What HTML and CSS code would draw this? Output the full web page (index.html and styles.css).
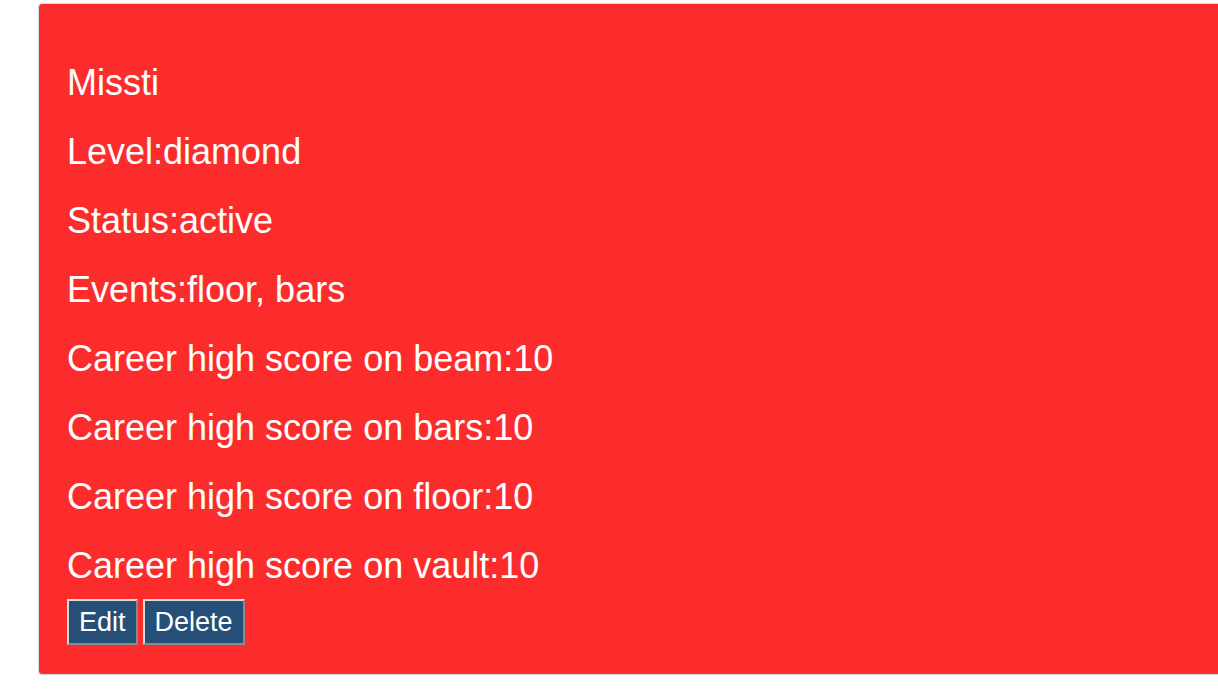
FILE: index.html
```html
<!DOCTYPE html>
<html lang="en">
<head>
<meta charset="utf-8">
<title>Gymnast</title>
<link rel="stylesheet" href="styles.css">
</head>
<body>
  <div class="page">
    <div class="card">
      <p class="line">Missti</p>
      <p class="line">Level:diamond</p>
      <p class="line">Status:active</p>
      <p class="line">Events:floor, bars</p>
      <p class="line">Career high score on beam:10</p>
      <p class="line">Career high score on bars:10</p>
      <p class="line">Career high score on floor:10</p>
      <p class="line">Career high score on vault:10</p>
      <div class="actions">
        <button class="btn">Edit</button>
        <button class="btn">Delete</button>
      </div>
    </div>
  </div>
</body>
</html>
```

FILE: styles.css
```css
html, body {
  margin: 0;
  padding: 0;
  background: #ffffff;
  overflow: hidden;
}

.page {
  padding: 3px 0 0 38px;
  width: 1300px;
}

.card {
  background: #fd2c2c;
  border: 1px solid #dcdcdc;
  border-radius: 4px;
  padding: 44px 28px 29px 28px;
  font-family: "Liberation Sans", Arial, sans-serif;
  color: #ffffff;
}

.line {
  margin: 0;
  font-size: 36px;
  line-height: 69px;
}

.actions {
  display: flex;
  gap: 5px;
  margin-top: -1px;
}

.btn {
  font-family: "Liberation Sans", Arial, sans-serif;
  font-size: 27px;
  line-height: 30px;
  color: #ffffff;
  background: #264f78;
  padding: 6px 10px;
  border: 2px solid;
  border-color: #dcdcdc #8a8a8a #8a8a8a #dcdcdc;
  border-radius: 0;
  margin: 0;
}
```
